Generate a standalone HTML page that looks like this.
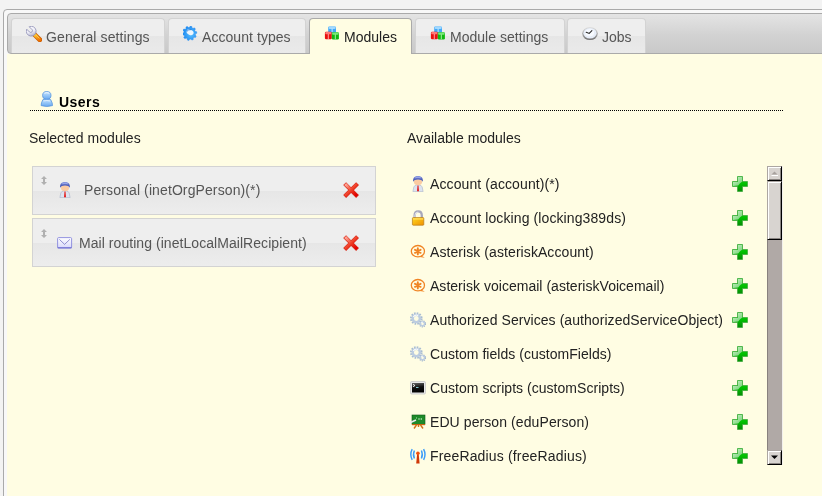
<!DOCTYPE html>
<html><head><meta charset="utf-8">
<style>
*{box-sizing:border-box;margin:0;padding:0}
html,body{width:822px;height:496px;overflow:hidden;background:#f3f3f3;font-family:"Liberation Sans",sans-serif;font-size:14px}
.abs{position:absolute}
.tab span,.txt{will-change:transform}
#outer{position:absolute;left:3px;top:9px;width:900px;height:600px;border:1px solid #aaa;border-radius:4px;background:#f8f8f8}
#hdr{position:absolute;left:7px;top:13px;width:900px;height:41px;border:1px solid #aaa;border-radius:4px;background:linear-gradient(#e4e4e4 0%,#d2d2d2 55%,#c9c9c9 100%)}
#panel{position:absolute;left:7px;top:54px;width:900px;height:600px;background:#fffde3}
.tab{position:absolute;top:18px;height:35px;border:1px solid #d3d3d3;border-bottom:0;border-radius:4px 4px 0 0;
 background:linear-gradient(#eeeeee 0,#eeeeee 50%,#e6e6e6 50%,#eaeaea 100%);color:#555;white-space:nowrap}
.tab.act{border-color:#aaa;background:#fffde3;color:#212121;height:36px}
.tab svg{position:absolute;top:7px;left:14px;width:16px;height:16px}
.tab span{position:absolute;left:34px;top:10px;line-height:16px}
.txt{position:absolute;white-space:nowrap;line-height:16px}
.box{position:absolute;left:32px;width:344px;height:49px;border:1px solid #d3d3d3;
 background:linear-gradient(#eeeeee 0,#eeeeee 23.5px,#e6e6e6 23.5px,#ededed 100%)}
.sbtn{background:#d8d4d0;border-style:solid;border-width:1px;border-color:#aca6a2 #000 #000 #aca6a2;box-shadow:inset 1px 1px 0 #fff,inset -1px -1px 0 #8a8582}
</style></head><body>

<svg width="0" height="0" style="position:absolute">
<defs>
 <linearGradient id="wr" x1="0.2" y1="0" x2="0.6" y2="1"><stop offset="0" stop-color="#ffffff"/><stop offset="0.55" stop-color="#eeeef8"/><stop offset="1" stop-color="#b0b0cc"/></linearGradient>
 <linearGradient id="hd" x1="0" y1="0" x2="1" y2="1"><stop offset="0" stop-color="#ffcc30"/><stop offset="1" stop-color="#f07000"/></linearGradient>

 <g id="wrench">
  <path d="M8.6,8.6 L13.8,13.8" stroke="#c85a00" stroke-width="4.8" stroke-linecap="round"/>
  <path d="M8.6,8.6 L13.8,13.8" stroke="url(#hd)" stroke-width="3.4" stroke-linecap="round"/>
  <path d="M10.2,9.2 L13.2,12.2" stroke="#ffe070" stroke-width="1" stroke-linecap="round" opacity="0.6"/>
  <path d="M3.20,0.73 A4.9,4.9 0 1 1 0.73,3.20 L3.54,6.01 A1.75,1.75 0 0 0 6.01,3.54 Z" fill="url(#wr)" stroke="#8c8cb4" stroke-width="0.8" stroke-linejoin="round"/>
 </g>
 <radialGradient id="gearg" cx="0.6" cy="0.55" r="0.6"><stop offset="0" stop-color="#5cc0ff"/><stop offset="1" stop-color="#1a88f0"/></radialGradient>
 <g id="gear">
  <path d="M6.60,1.35 L7.28,0.08 L8.82,0.40 L8.94,1.84 L10.07,2.48 L11.36,1.85 L12.42,3.02 L11.68,4.25 L12.21,5.43 L13.63,5.68 L13.80,7.25 L12.47,7.81 L12.21,9.07 L13.21,10.11 L12.42,11.48 L11.03,11.15 L10.07,12.02 L10.27,13.45 L8.82,14.10 L7.89,13.01 L6.60,13.15 L5.92,14.42 L4.38,14.10 L4.26,12.66 L3.13,12.02 L1.84,12.65 L0.78,11.48 L1.52,10.25 L0.99,9.07 L-0.43,8.82 L-0.60,7.25 L0.73,6.69 L0.99,5.43 L-0.01,4.39 L0.78,3.02 L2.17,3.35 L3.13,2.48 L2.93,1.05 L4.38,0.40 L5.31,1.49 Z" fill="url(#gearg)" stroke="#2a8ef0" stroke-width="0.5" stroke-linejoin="round"/>
  <ellipse cx="7.1" cy="6.3" rx="3.6" ry="2.6" transform="rotate(25 7.1 6.3)" fill="#eef6fe"/>
  <path d="M3.9,5.4 Q5.2,3.2 8.4,3.6" stroke="#1870d0" stroke-width="0.8" fill="none"/>
 </g>
 <g id="cubes">
  <rect x="4.2" y="0.4" width="7.8" height="6.6" rx="1.2" fill="#40a8f8"/><rect x="4.6" y="0.6" width="7" height="2.4" rx="1" fill="#a0d8ff"/>
  <path d="M8.1,2.6 V6.6" stroke="#d8f0ff" stroke-width="0.9"/>
  <rect x="0.9" y="5.8" width="6.9" height="7.5" rx="1.2" fill="#e81010"/><rect x="1.2" y="6" width="6.2" height="2.3" rx="1" fill="#ff7878"/>
  <path d="M4.3,8 V13" stroke="#ffb0b0" stroke-width="0.9"/>
  <rect x="7.8" y="6.2" width="7.1" height="7.3" rx="1.2" fill="#10b810"/><rect x="8.1" y="6.4" width="6.5" height="2.3" rx="1" fill="#78e878"/>
  <path d="M11.3,8.4 V13.2" stroke="#b8f8b8" stroke-width="0.9"/>
 </g>
 <linearGradient id="clk" x1="0" y1="0" x2="0" y2="1"><stop offset="0" stop-color="#e0e0e0"/><stop offset="1" stop-color="#707070"/></linearGradient>
 <g id="clock">
  <ellipse cx="8" cy="7.6" rx="7.8" ry="6.5" fill="url(#clk)"/>
  <ellipse cx="8" cy="7.2" rx="6.6" ry="5.3" fill="#e8eef8"/><ellipse cx="7.6" cy="6.8" rx="4.5" ry="3.5" fill="#f8fbff"/>
  <path d="M4.2,6.2 L7.2,7.4 L9.9,4.6" stroke="#2a2a2a" stroke-width="1.1" fill="none" stroke-linecap="round"/>
 </g>
 <linearGradient id="ug" x1="0" y1="0" x2="0" y2="1"><stop offset="0" stop-color="#c8e4ff"/><stop offset="0.5" stop-color="#98c8f8"/><stop offset="1" stop-color="#68a8f0"/></linearGradient>
 <g id="user">
  <path d="M3.9,8.6 Q7.8,6.8 11.7,8.6 Q13.6,12 13.5,14.6 Q7.8,16.4 2.1,14.6 Q2,12 3.9,8.6 Z" fill="url(#ug)" stroke="#5090dc" stroke-width="0.75"/>
  <ellipse cx="7.8" cy="4.4" rx="4.2" ry="3.9" fill="url(#ug)" stroke="#5090dc" stroke-width="0.75"/>
  <path d="M5.4,2.2 Q7.8,1.2 10.2,2.2" stroke="#ffffff" stroke-width="0.9" fill="none" opacity="0.9"/>
  <path d="M4.6,10 Q7.8,9 11,10" stroke="#ffffff" stroke-width="0.8" fill="none" opacity="0.7"/>
 </g>
 <linearGradient id="hair" x1="0" y1="0" x2="0" y2="1"><stop offset="0" stop-color="#8898e0"/><stop offset="1" stop-color="#2838a0"/></linearGradient>
 <g id="person">
  <path d="M2.9,15.6 L3.8,11 Q4.6,9.3 6.4,9 L9.6,9 Q11.4,9.3 12.2,11 L13.1,15.6 Z" fill="#dde3f0" stroke="#aab2ca" stroke-width="0.6"/>
  <path d="M7.5,9.4 L8.5,9.4 L9,15.2 L7,15.2 Z" fill="#e41c1c"/>
  <ellipse cx="8" cy="6" rx="4.1" ry="3.1" fill="#fbcba2"/>
  <path d="M3.2,5.8 C2.7,1.6 4.9,0 8,0 C11.1,0 13.3,1.6 12.8,5.8 C12.1,4.3 10.4,3.5 8,3.5 C5.6,3.5 3.9,4.3 3.2,5.8 Z" fill="url(#hair)"/>
  <path d="M5.2,1.8 Q8,0.8 10.8,1.8" stroke="#a8b4f0" stroke-width="0.8" fill="none"/>
 </g>
 <linearGradient id="mailg" x1="0" y1="0" x2="0" y2="1"><stop offset="0" stop-color="#ffffff"/><stop offset="1" stop-color="#d8d8fa"/></linearGradient>
 <g id="mail">
  <rect x="0.6" y="2.6" width="14" height="10.4" rx="1" fill="url(#mailg)" stroke="#8888dc" stroke-width="0.9"/>
  <path d="M2.4,4.4 L7.6,9.4 L12.8,4.4" fill="none" stroke="#7878c4" stroke-width="0.8"/>
  <rect x="0.6" y="12.3" width="14" height="1" fill="#6868d0"/>
 </g>
 <linearGradient id="xg" x1="0" y1="0" x2="1" y2="1"><stop offset="0" stop-color="#ffa090"/><stop offset="0.5" stop-color="#f04028"/><stop offset="1" stop-color="#e00000"/></linearGradient>
 <g id="xdel">
  <path d="M3.1,3.1 L13.1,13.1 M13.1,3.1 L3.1,13.1" stroke="#d82818" stroke-width="4.1" stroke-linecap="square"/>
  <path d="M3.1,3.1 L13.1,13.1 M13.1,3.1 L3.1,13.1" stroke="url(#xg)" stroke-width="2.8" stroke-linecap="square"/>
 </g>
 <linearGradient id="pg" x1="0" y1="0" x2="0" y2="1"><stop offset="0" stop-color="#20c020"/><stop offset="0.5" stop-color="#00c000"/><stop offset="1" stop-color="#088a08"/></linearGradient>
 <linearGradient id="pgh" x1="0" y1="0" x2="1" y2="1"><stop offset="0" stop-color="#f0fff0"/><stop offset="1" stop-color="#80d080"/></linearGradient>
 <g id="plus">
  <path d="M5.5,0.5 H10.5 V5.5 H15.5 V10.5 H10.5 V15.5 H5.5 V10.5 H0.5 V5.5 H5.5 Z" fill="url(#pg)" stroke="#38a838" stroke-width="0.7"/>
  <path d="M6,1 H10 V5.8 Q8,7 6.2,9.6 Q4,10 1,10 V6 H6 Z" fill="url(#pgh)" opacity="0.85"/>
 </g>
 <linearGradient id="lockg" x1="0" y1="0" x2="1" y2="1"><stop offset="0" stop-color="#ffd820"/><stop offset="1" stop-color="#f09000"/></linearGradient>
 <g id="lock">
  <path d="M4.6,8 V5.6 Q4.6,1.4 8.2,1.4 Q11.8,1.4 11.8,5.6 V8" fill="none" stroke="#a8a8bc" stroke-width="2.3"/>
  <path d="M4.9,7 V5.6 Q4.9,2 8.2,2" fill="none" stroke="#f0f0f8" stroke-width="0.8"/>
  <rect x="2.4" y="7.6" width="11.4" height="7.6" rx="0.8" fill="url(#lockg)" stroke="#b87818" stroke-width="0.7"/>
  <rect x="3" y="8.1" width="10.2" height="1.6" fill="#ffe060" opacity="0.8"/>
 </g>
 <g id="ast">
  <ellipse cx="7.9" cy="7.2" rx="6.6" ry="5.7" fill="none" stroke="#f08424" stroke-width="1.3"/>
  <path d="M11.2,11.6 L14.8,13.8 L9.6,12.9 Z" fill="#f08424"/>
  <g stroke="#f08424" stroke-width="1.9" stroke-linecap="round"><path d="M7.8,4.2 V10.4 M5,5.8 L10.6,8.8 M5,8.8 L10.6,5.8"/></g>
 </g>
 <g id="gears">
  <circle cx="6.3" cy="6.5" r="5" fill="none" stroke="#a8bcd2" stroke-width="2.6" stroke-dasharray="1.5 1.1"/>
  <circle cx="6.3" cy="6.5" r="3.6" fill="none" stroke="#bccce0" stroke-width="2.4"/>
  <path d="M3.4,5 A3.4,3.4 0 0 1 8.2,3.5" stroke="#ffffff" stroke-width="1.1" fill="none"/>
  <circle cx="12.5" cy="11.8" r="2.7" fill="none" stroke="#a0b4cc" stroke-width="1.8" stroke-dasharray="1.1 0.8"/>
  <circle cx="12.5" cy="11.8" r="2" fill="none" stroke="#bccce0" stroke-width="1.5"/>
  <path d="M11,11 A1.6,1.6 0 0 1 13,10.2" stroke="#ffffff" stroke-width="0.8" fill="none"/>
 </g>
 <linearGradient id="termg" x1="0.2" y1="0" x2="0.4" y2="1"><stop offset="0" stop-color="#606060"/><stop offset="0.5" stop-color="#101010"/><stop offset="1" stop-color="#000"/></linearGradient>
 <g id="term">
  <rect x="0.5" y="1.5" width="15" height="12.5" rx="1.2" fill="#e8e8e8" stroke="#c8c8c8" stroke-width="0.8"/>
  <rect x="2" y="3" width="12" height="9.5" fill="url(#termg)"/>
  <path d="M3,4.3 L5,5.5 L3,6.7" stroke="#fff" stroke-width="0.9" fill="none"/>
  <rect x="6" y="7" width="2.5" height="1" fill="#80c8d0"/>
 </g>
 <g id="edu">
  <rect x="2" y="1" width="13" height="9.5" fill="#1e8a2a" stroke="#0e5a1a" stroke-width="0.6"/>
  <path d="M6,4 h1 M9,4 v2 M11.5,4 q-1,1 0,2" stroke="#c0e8c0" stroke-width="0.9" fill="none"/>
  <path d="M0.5,8.5 L6,6" stroke="#e8e8f0" stroke-width="1.6"/>
  <rect x="2" y="10" width="13" height="1.2" fill="#c86010"/>
  <path d="M4,14.5 L6.5,11 M13,14.5 L10.5,11 M8.5,11 V13" stroke="#d07018" stroke-width="1.4"/>
 </g>
 <g id="radio">
  <path d="M6.2,15.5 L7.2,5 L8.6,5 L9.6,15.5 Z" fill="#d03808"/>
  <circle cx="7.9" cy="5.2" r="1.8" fill="#f05010"/>
  <g fill="none" stroke="#3c9cf8" stroke-width="1.45">
   <path d="M4.4,2.5 Q2.6,6.5 4.4,10.5"/><path d="M2.2,1.2 Q-0.6,6.5 2.2,11.8"/>
   <path d="M11.4,2.5 Q13.2,6.5 11.4,10.5"/><path d="M13.6,1.2 Q16.4,6.5 13.6,11.8"/>
  </g>
 </g>
 <g id="updown"><path fill="#b0b0b0" d="M8,4 L11,7 L9,7 L9,10 L11,10 L8,13 L5,10 L7,10 L7,7 L5,7 Z"/></g>
</defs></svg>

<div id="outer"></div><div id="hdr"></div><div id="panel"></div>
<div class="tab" style="left:11px;width:154px"><svg viewBox="0 0 16 16"><use href="#wrench"/></svg><span style="left:34px;letter-spacing:0.106px">General settings</span></div>
<div class="tab" style="left:168px;width:138px"><svg viewBox="0 0 16 16"><use href="#gear"/></svg><span style="left:33px;letter-spacing:0.057px">Account types</span></div>
<div class="tab act" style="left:309px;width:103px"><svg viewBox="0 0 16 16"><use href="#cubes"/></svg><span style="left:34px;letter-spacing:0.000px">Modules</span></div>
<div class="tab" style="left:415px;width:150px"><svg viewBox="0 0 16 16"><use href="#cubes"/></svg><span style="left:34px;letter-spacing:0.020px">Module settings</span></div>
<div class="tab" style="left:567px;width:79px"><svg viewBox="0 0 16 16"><use href="#clock"/></svg><span style="left:34px;letter-spacing:0.000px">Jobs</span></div>
<svg class="abs" style="left:39px;top:90.5px" width="16" height="17" viewBox="0 0 16 17"><use href="#user"/></svg>
<div class="txt" style="left:59px;top:94px;font-weight:bold;color:#000;letter-spacing:0.45px">Users</div>
<div class="abs" style="left:30px;top:110px;width:753px;height:1px;border-top:1px dotted #000"></div>
<div class="txt" style="left:29px;top:130px;color:#222;letter-spacing:0.025px;">Selected modules</div>
<div class="txt" style="left:407px;top:130px;color:#222;letter-spacing:0.024px;">Available modules</div>
<div class="box" style="top:166px"></div><div class="box" style="top:218px"></div>
<svg class="abs" style="left:36px;top:172px" width="16" height="16" viewBox="0 0 16 16"><use href="#updown"/></svg>
<svg class="abs" style="left:36px;top:225px" width="16" height="16" viewBox="0 0 16 16"><use href="#updown"/></svg>
<svg class="abs" style="left:57px;top:182px" width="16" height="16" viewBox="0 0 16 16"><use href="#person"/></svg>
<div class="txt" style="left:84px;top:182px;color:#555;letter-spacing:0.107px;">Personal (inetOrgPerson)(*)</div>
<svg class="abs" style="left:57px;top:235px" width="16" height="16" viewBox="0 0 16 16"><use href="#mail"/></svg>
<div class="txt" style="left:79px;top:235px;color:#555;letter-spacing:0.054px;">Mail routing (inetLocalMailRecipient)</div>
<svg class="abs" style="left:343px;top:182px" width="16" height="16" viewBox="0 0 16 16"><use href="#xdel"/></svg>
<svg class="abs" style="left:343px;top:235px" width="16" height="16" viewBox="0 0 16 16"><use href="#xdel"/></svg>
<svg class="abs" style="left:410px;top:176px" width="16" height="16" viewBox="0 0 16 16"><use href="#person"/></svg>
<div class="txt" style="left:430px;top:176px;color:#222;letter-spacing:0.100px;">Account (account)(*)</div>
<svg class="abs" style="left:732px;top:176px" width="16" height="16" viewBox="0 0 16 16"><use href="#plus"/></svg>
<svg class="abs" style="left:410px;top:210px" width="16" height="16" viewBox="0 0 16 16"><use href="#lock"/></svg>
<div class="txt" style="left:430px;top:210px;color:#222;letter-spacing:0.100px;">Account locking (locking389ds)</div>
<svg class="abs" style="left:732px;top:210px" width="16" height="16" viewBox="0 0 16 16"><use href="#plus"/></svg>
<svg class="abs" style="left:410px;top:244px" width="16" height="16" viewBox="0 0 16 16"><use href="#ast"/></svg>
<div class="txt" style="left:430px;top:244px;color:#222;letter-spacing:0.077px;">Asterisk (asteriskAccount)</div>
<svg class="abs" style="left:732px;top:244px" width="16" height="16" viewBox="0 0 16 16"><use href="#plus"/></svg>
<svg class="abs" style="left:410px;top:278px" width="16" height="16" viewBox="0 0 16 16"><use href="#ast"/></svg>
<div class="txt" style="left:430px;top:278px;color:#222;letter-spacing:0.026px;">Asterisk voicemail (asteriskVoicemail)</div>
<svg class="abs" style="left:732px;top:278px" width="16" height="16" viewBox="0 0 16 16"><use href="#plus"/></svg>
<svg class="abs" style="left:410px;top:312px" width="16" height="16" viewBox="0 0 16 16"><use href="#gears"/></svg>
<div class="txt" style="left:430px;top:312px;color:#222;letter-spacing:0.062px;">Authorized Services (authorizedServiceObject)</div>
<svg class="abs" style="left:732px;top:312px" width="16" height="16" viewBox="0 0 16 16"><use href="#plus"/></svg>
<svg class="abs" style="left:410px;top:346px" width="16" height="16" viewBox="0 0 16 16"><use href="#gears"/></svg>
<div class="txt" style="left:430px;top:346px;color:#222;letter-spacing:0.036px;">Custom fields (customFields)</div>
<svg class="abs" style="left:732px;top:346px" width="16" height="16" viewBox="0 0 16 16"><use href="#plus"/></svg>
<svg class="abs" style="left:410px;top:380px" width="16" height="16" viewBox="0 0 16 16"><use href="#term"/></svg>
<div class="txt" style="left:430px;top:380px;color:#222;letter-spacing:0.037px;">Custom scripts (customScripts)</div>
<svg class="abs" style="left:732px;top:380px" width="16" height="16" viewBox="0 0 16 16"><use href="#plus"/></svg>
<svg class="abs" style="left:410px;top:414px" width="16" height="16" viewBox="0 0 16 16"><use href="#edu"/></svg>
<div class="txt" style="left:430px;top:414px;color:#222;letter-spacing:0.086px;">EDU person (eduPerson)</div>
<svg class="abs" style="left:732px;top:414px" width="16" height="16" viewBox="0 0 16 16"><use href="#plus"/></svg>
<svg class="abs" style="left:410px;top:448px" width="16" height="16" viewBox="0 0 16 16"><use href="#radio"/></svg>
<div class="txt" style="left:430px;top:448px;color:#222;letter-spacing:0.157px;">FreeRadius (freeRadius)</div>
<svg class="abs" style="left:732px;top:448px" width="16" height="16" viewBox="0 0 16 16"><use href="#plus"/></svg>
<div class="abs" style="left:767px;top:166px;width:16px;height:299px;background:#b0a9a6;border-left:1px solid #88817e;border-right:1px solid #f2f0ec"></div>
<div class="abs sbtn" style="left:767px;top:166px;width:15px;height:15px"></div>
<svg class="abs" style="left:767px;top:166px" width="15" height="15" viewBox="0 0 15 15"><path d="M4.5,8.5 L7.5,5.5 L10.5,8.5 Z" fill="#a8a29e"/><rect x="4.5" y="9" width="6.5" height="1" fill="#fff"/></svg>
<div class="abs sbtn" style="left:767px;top:181px;width:15px;height:59px"></div>
<div class="abs sbtn" style="left:767px;top:450px;width:15px;height:15px"></div>
<svg class="abs" style="left:767px;top:450px" width="15" height="15" viewBox="0 0 15 15"><path d="M4,5.5 L11,5.5 L7.5,9 Z" fill="#000"/></svg>
</body></html>
